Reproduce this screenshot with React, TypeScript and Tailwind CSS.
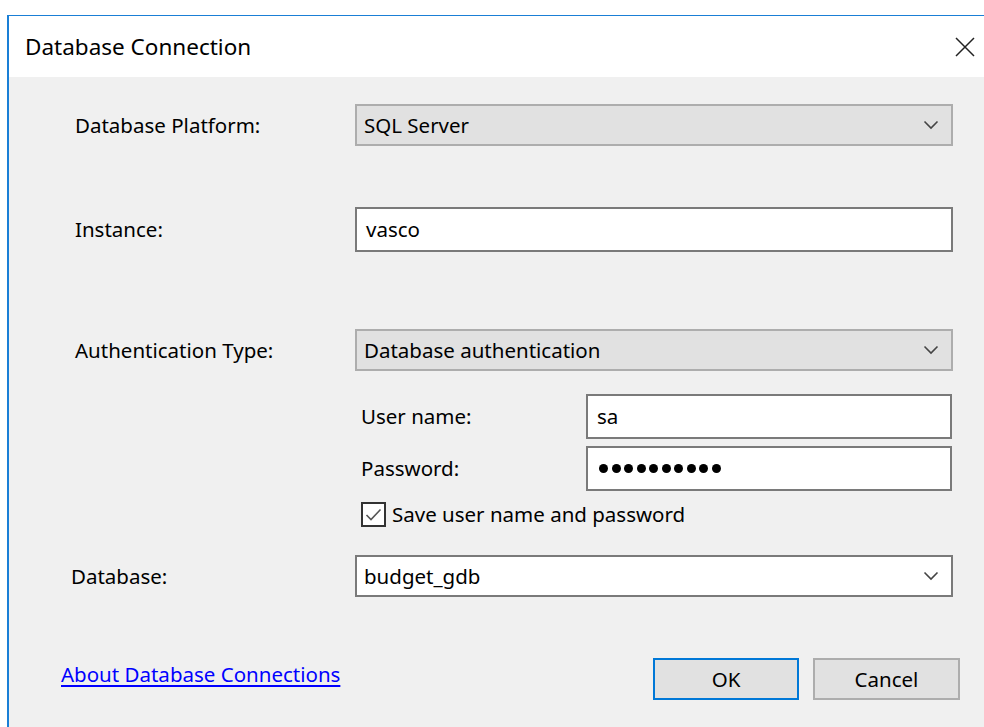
import React from "react";

const font = { fontFamily: '"Noto Sans", "Liberation Sans", sans-serif' };

function Chevron() {
  return (
    <svg width="16" height="10" viewBox="0 0 16 10" className="shrink-0">
      <path d="M1.5 1.5 L8 8 L14.5 1.5" fill="none" stroke="#444" strokeWidth="1.6" />
    </svg>
  );
}

function Select({ value, white }: { value: string; white?: boolean }) {
  return (
    <div
      className={`flex h-[42px] w-[598px] items-center justify-between border-2 pl-[7px] pr-[12px] ${
        white ? "border-[#7a7a7a] bg-white" : "border-[#adadad] bg-[#e1e1e1]"
      }`}
    >
      <span>{value}</span>
      <Chevron />
    </div>
  );
}

function TextBox({ children, w, h }: { children: React.ReactNode; w: string; h: string }) {
  return (
    <div className={`flex items-center border-2 border-[#7a7a7a] bg-white pl-[9px] ${w} ${h}`}>
      {children}
    </div>
  );
}

export default function App() {
  return (
    <div className="h-[727px] w-[984px] overflow-hidden bg-white pl-[7px] pt-[15px] text-[20.5px] text-black" style={font}>
      <div className="flex h-[760px] flex-col border-l-2 border-t border-[#1a7fd6]">
        {/* title bar */}
        <div className="flex h-[61px] shrink-0 items-center justify-between bg-white pl-[16px] pr-[8px]">
          <span className="text-[22.5px]">Database Connection</span>
          <svg width="22" height="22" viewBox="0 0 22 22">
            <path d="M2 2 L20 20 M20 2 L2 20" stroke="#222" strokeWidth="1.5" />
          </svg>
        </div>

        {/* form body */}
        <div className="flex flex-1 flex-col bg-[#f0f0f0] pl-[66px]">
          <div className="mt-[27px] flex items-center">
            <span className="w-[280px]">Database Platform:</span>
            <Select value="SQL Server" />
          </div>

          <div className="mt-[61px] flex items-center">
            <span className="w-[280px]">Instance:</span>
            <TextBox w="w-[598px]" h="h-[45px]">vasco</TextBox>
          </div>

          <div className="mt-[77px] flex items-center">
            <span className="w-[280px]">Authentication Type:</span>
            <Select value="Database authentication" />
          </div>

          <div className="ml-[286px] mt-[23px] flex flex-col">
            <div className="flex items-center">
              <span className="w-[225px]">User name:</span>
              <TextBox w="w-[366px]" h="h-[45px]">sa</TextBox>
            </div>
            <div className="mt-[7px] flex items-center">
              <span className="w-[225px]">Password:</span>
              <TextBox w="w-[366px]" h="h-[45px]">
                <div className="flex gap-[3.5px] pl-[2px]">
                  {Array.from({ length: 10 }).map((_, i) => (
                    <span key={i} className="h-[9px] w-[9px] rounded-full bg-black" />
                  ))}
                </div>
              </TextBox>
            </div>
            <div className="mt-[11px] flex h-[25px] items-center gap-[6px]">
              <span className="flex h-[25px] w-[25px] items-center justify-center border-2 border-[#333] bg-white">
                <svg width="17" height="14" viewBox="0 0 17 14">
                  <path d="M1.5 7 L6 11.5 L15.5 1.5" fill="none" stroke="#555" strokeWidth="1.6" />
                </svg>
              </span>
              <span>Save user name and password</span>
            </div>
          </div>

          <div className="-ml-[4px] mt-[28px] flex items-center">
            <span className="w-[284px]">Database:</span>
            <Select value="budget_gdb" white />
          </div>

          <div className="-ml-[14px] mt-[61px] flex items-center">
            <a href="#" className="mb-[9px] w-[592px] text-[#0000ff] underline underline-offset-[3px]">
              About Database Connections
            </a>
            <button className="h-[42px] w-[146px] border-2 border-[#0078d7] bg-[#e1e1e1]">OK</button>
            <button className="ml-[14px] h-[42px] w-[147px] border-2 border-[#adadad] bg-[#e1e1e1]">Cancel</button>
          </div>
        </div>
      </div>
    </div>
  );
}
